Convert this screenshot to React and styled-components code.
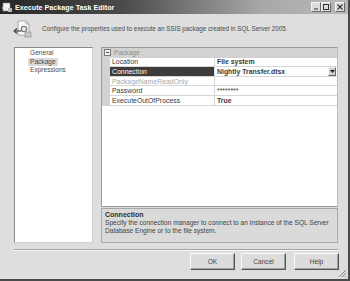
import styled, { createGlobalStyle } from "styled-components";

const GlobalStyle = createGlobalStyle`
  html, body { margin: 0; padding: 0; background: #dcdcdc; }
  body { font-family: "Liberation Sans", Arial, sans-serif; }
`;

const Window = styled.div`
  position: relative;
  width: 350px;
  height: 281px;
  box-sizing: border-box;
  background: #dedede;
  border-right: 2px solid #4a4a4a;
  border-bottom: 2px solid #4a4a4a;
  display: flex;
  flex-direction: column;
  font-size: 6.6px;
  color: #333;
  overflow: hidden;
`;

const TitleBar = styled.div`
  height: 14px;
  flex: none;
  display: flex;
  align-items: center;
  padding: 0 3px 0 2px;
  background: linear-gradient(to right, #262626 0%, #4a4a4a 35%, #a8a8a8 75%, #b8b8b8 100%);
`;

const Title = styled.span`
  flex: 1;
  margin-left: 3px;
  color: #fff;
  font-weight: bold;
  font-size: 7.2px;
`;

const CaptionButton = styled.div`
  width: 8px;
  height: 8px;
  margin-left: ${(p) => p.$gap}px;
  background: #dcdcdc;
  border: 1px solid;
  border-color: #f4f4f4 #666 #666 #f4f4f4;
  display: flex;
  align-items: center;
  justify-content: center;
`;

const Header = styled.div`
  height: 33px;
  flex: none;
  display: flex;
  align-items: flex-start;
  padding: 6px 0 0 13px;
  box-sizing: border-box;
`;

const HeaderText = styled.span`
  margin: 5px 0 0 9px;
  font-size: 6.3px;
  color: #4a4a4a;
`;

const Body = styled.div`
  height: 196px;
  flex: none;
  display: flex;
  gap: 8px;
  padding: 0 10px 0 14px;
`;

const NavList = styled.div`
  width: 79px;
  box-sizing: border-box;
  background: #fff;
  border: 1px solid #8a8a8a;
  border-right-color: #cfcfcf;
  border-bottom-color: #cfcfcf;
  padding: 1px 0 0 13px;
  display: flex;
  flex-direction: column;
  align-items: flex-start;
`;

const NavItem = styled.div`
  height: 8.7px;
  line-height: 8.7px;
  padding: 0 2px;
  color: #4a4a4a;
  background: ${(p) => (p.$active ? "#dadada" : "transparent")};
`;

const RightCol = styled.div`
  flex: 1;
  display: flex;
  flex-direction: column;
  gap: 1px;
`;

const Grid = styled.div`
  flex: 1;
  background: #fff;
  border: 1px solid #9a9a9a;
  border-right-color: #bdbdbd;
  box-sizing: border-box;
`;

const CategoryRow = styled.div`
  height: 9.6px;
  display: flex;
  align-items: center;
  background: #d2d2d2;
  color: #8c8c8c;
`;

const Toggle = styled.div`
  width: 5px;
  height: 5px;
  margin: 0 3px 0 2px;
  border: 1px solid #7a7a7a;
  background: #f2f2f2;
  position: relative;
  &::after {
    content: "";
    position: absolute;
    left: 1px;
    right: 1px;
    top: 2px;
    height: 1px;
    background: #555;
  }
`;

const PropRow = styled.div`
  height: 9.6px;
  display: grid;
  grid-template-columns: 8px 105px 1fr;
`;

const Margin = styled.div`
  background: #d2d2d2;
`;

const Cell = styled.div`
  display: flex;
  align-items: center;
  padding-left: 2px;
  font-size: 6.9px;
  border-bottom: 1px solid #d6d6d6;
  border-right: ${(p) => (p.$label ? "1px solid #d6d6d6" : "none")};
  background: ${(p) => (p.$selected ? "#3c3c3c" : "#fff")};
  color: ${(p) => (p.$selected ? "#fff" : p.$muted ? "#a8a8a8" : "#3a3a3a")};
  font-weight: ${(p) => (p.$bold ? "bold" : "normal")};
  white-space: nowrap;
`;

const Value = styled.span`
  flex: 1;
`;

const DropButton = styled.div`
  width: 6px;
  height: 7px;
  margin-right: 1px;
  background: #cfcfcf;
  border: 1px solid;
  border-color: #f0f0f0 #666 #666 #f0f0f0;
  display: flex;
  align-items: center;
  justify-content: center;
`;

const Description = styled.div`
  height: 35px;
  box-sizing: border-box;
  border: 1px solid #a8a8a8;
  background: #dadada;
  padding: 2px 3px;
  color: #444;
`;

const DescTitle = styled.div`
  font-weight: bold;
  font-size: 7px;
  color: #2e2e2e;
  margin-bottom: 1px;
`;

const DescLine = styled.div`
  line-height: 8px;
`;

const Footer = styled.div`
  flex: 1;
  padding: 6px 10px 0 14px;
`;

const Separator = styled.div`
  height: 1px;
  background: #a4a4a4;
  border-bottom: 1px solid #f6f6f6;
`;

const ButtonRow = styled.div`
  display: flex;
  justify-content: flex-end;
  margin-top: 2px;
  margin-right: -1px;
`;

const Button = styled.div`
  width: ${(p) => p.$w}px;
  height: 17px;
  margin-left: ${(p) => p.$gap}px;
  box-sizing: border-box;
  border: 1px solid;
  border-color: #fafafa #555 #555 #fafafa;
  box-shadow: inset -1px -1px 0 #a0a0a0;
  background: #dcdcdc;
  display: flex;
  align-items: center;
  justify-content: center;
  color: #444;
`;

const Grip = styled.svg`
  position: absolute;
  right: 1px;
  bottom: 1px;
`;

const Arrow = () => (
  <svg width="5" height="3" viewBox="0 0 5 3">
    <path d="M0 0h5L2.5 3z" fill="#222" />
  </svg>
);

const PackageIcon = () => (
  <svg width="20" height="18" viewBox="0 0 20 18">
    <path d="M5 1h8l3 3v11H5z" fill="#fafafa" stroke="#9a9a9a" strokeWidth="0.8" />
    <path d="M13 1v3h3" fill="none" stroke="#9a9a9a" strokeWidth="0.8" />
    <circle cx="11" cy="9" r="2.6" fill="none" stroke="#7a7a7a" strokeWidth="1.4" />
    <rect x="12" y="12" width="6" height="5" fill="#c8c8c8" stroke="#888" strokeWidth="0.6" />
    <path d="M1 11h7" stroke="#444" strokeWidth="1.2" />
    <path d="M1 11l3-2.5M1 11l3 2.5" stroke="#444" strokeWidth="1.2" fill="none" />
  </svg>
);

const TitleIcon = () => (
  <svg width="10" height="10" viewBox="0 0 10 10">
    <rect x="1" y="1" width="7" height="8" fill="#f4f4f4" stroke="#888" strokeWidth="0.6" />
    <path d="M0 6h5" stroke="#ddd" strokeWidth="1.2" />
    <rect x="6" y="6" width="4" height="4" fill="#bbb" />
  </svg>
);

const rows = [
  { label: "Location", value: "File system", bold: true },
  { label: "Connection", value: "Nightly Transfer.dtsx", bold: true, selected: true, drop: true },
  { label: "PackageNameReadOnly", value: "", muted: true },
  { label: "Password", value: "********" },
  { label: "ExecuteOutOfProcess", value: "True", bold: true },
];

export default function App() {
  return (
    <>
      <GlobalStyle />
      <Window>
        <TitleBar>
          <TitleIcon />
          <Title>Execute Package Task Editor</Title>
          <CaptionButton $gap={0}>
            <svg width="5" height="5" viewBox="0 0 5 5"><path d="M0 4h4" stroke="#333" strokeWidth="1" /></svg>
          </CaptionButton>
          <CaptionButton $gap={0}>
            <svg width="6" height="6" viewBox="0 0 6 6"><rect x="0.5" y="0.5" width="5" height="5" fill="none" stroke="#333" strokeWidth="1" /></svg>
          </CaptionButton>
          <CaptionButton $gap={4}>
            <svg width="6" height="6" viewBox="0 0 6 6"><path d="M0.5 0.5l5 5M5.5 0.5l-5 5" stroke="#333" strokeWidth="1.1" /></svg>
          </CaptionButton>
        </TitleBar>

        <Header>
          <PackageIcon />
          <HeaderText>
            Configure the properties used to execute an SSIS package created in SQL Server 2005.
          </HeaderText>
        </Header>

        <Body>
          <NavList>
            <NavItem>General</NavItem>
            <NavItem $active>Package</NavItem>
            <NavItem>Expressions</NavItem>
          </NavList>

          <RightCol>
            <Grid>
              <CategoryRow>
                <Toggle />
                Package
              </CategoryRow>
              {rows.map((r) => (
                <PropRow key={r.label}>
                  <Margin />
                  <Cell $label $selected={r.selected} $muted={r.muted}>
                    {r.label}
                  </Cell>
                  <Cell $bold={r.bold}>
                    <Value>{r.value}</Value>
                    {r.drop && (
                      <DropButton>
                        <Arrow />
                      </DropButton>
                    )}
                  </Cell>
                </PropRow>
              ))}
            </Grid>
            <Description>
              <DescTitle>Connection</DescTitle>
              <DescLine>Specify the connection manager to connect to an instance of the SQL Server</DescLine>
              <DescLine>Database Engine or to the file system.</DescLine>
            </Description>
          </RightCol>
        </Body>

        <Footer>
          <Separator />
          <ButtonRow>
            <Button $w={45} $gap={0}>OK</Button>
            <Button $w={45} $gap={6}>Cancel</Button>
            <Button $w={45} $gap={8}>Help</Button>
          </ButtonRow>
        </Footer>

        <Grip width="9" height="9" viewBox="0 0 9 9">
          <path d="M8 1L1 8M8 4L4 8M8 7L7 8" stroke="#888" strokeWidth="1" />
        </Grip>
      </Window>
    </>
  );
}
